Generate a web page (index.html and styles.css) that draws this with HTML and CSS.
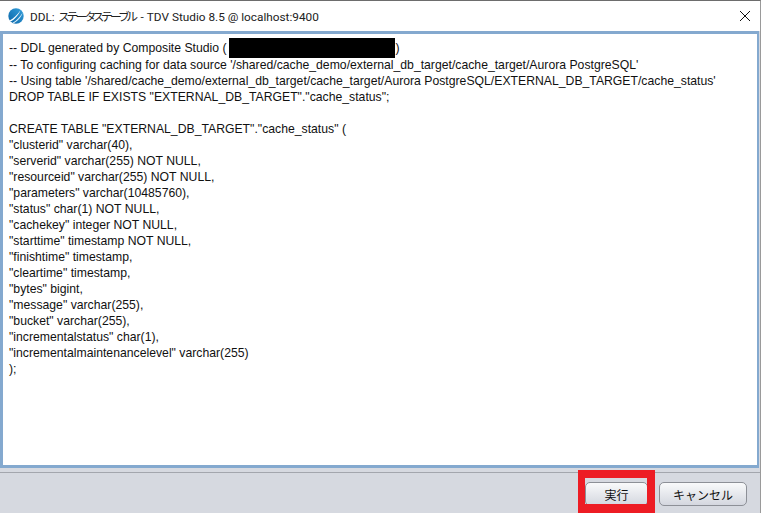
FILE: index.html
```html
<!DOCTYPE html>
<html lang="ja">
<head>
<meta charset="utf-8">
<title>DDL</title>
<link rel="stylesheet" href="styles.css">
</head>
<body>
<div class="window">
  <header class="titlebar">
    <svg class="logo" viewBox="0 0 16 16" width="16" height="16" aria-hidden="true">
      <defs><linearGradient id="g" x1="0" y1="1" x2="1" y2="0"><stop offset="0" stop-color="#0b66a8"/><stop offset="1" stop-color="#35a0dc"/></linearGradient></defs>
      <circle cx="8" cy="8" r="7.7" fill="url(#g)"/>
      <path d="M1.6 12.6C5.5 10.5 9.5 6.5 12.5 2.2C11 6.5 7 11 2.8 13.6Z" fill="#fff"/>
      <path d="M4.6 14.8C8.5 12.8 12 9 14.6 4.8C13.5 9 9.8 13 5.8 15.2Z" fill="#dff0fa"/>
    </svg>
    <span class="title">DDL: <span class="kana">ステータステーブル</span> - TDV Studio 8.5 @ localhost:9400</span>
    <svg class="close" viewBox="0 0 10 10" width="10" height="10" aria-hidden="true"><path d="M0 0l10 10M10 0L0 10" stroke="#111" stroke-width="1" fill="none"/></svg>
  </header>
  <main class="editor">
    <div class="code">-- DDL generated by Composite Studio (<span class="redact"></span>)</div>
<pre class="code rest">-- To configuring caching for data source '/shared/cache_demo/external_db_target/cache_target/Aurora PostgreSQL'
-- Using table '/shared/cache_demo/external_db_target/cache_target/Aurora PostgreSQL/EXTERNAL_DB_TARGET/cache_status'
DROP TABLE IF EXISTS "EXTERNAL_DB_TARGET"."cache_status";

CREATE TABLE "EXTERNAL_DB_TARGET"."cache_status" (
"clusterid" varchar(40),
"serverid" varchar(255) NOT NULL,
"resourceid" varchar(255) NOT NULL,
"parameters" varchar(10485760),
"status" char(1) NOT NULL,
"cachekey" integer NOT NULL,
"starttime" timestamp NOT NULL,
"finishtime" timestamp,
"cleartime" timestamp,
"bytes" bigint,
"message" varchar(255),
"bucket" varchar(255),
"incrementalstatus" char(1),
"incrementalmaintenancelevel" varchar(255)
);</pre>
  </main>
  <footer class="actions">
    <button class="btn btn-run" type="button">実行</button>
    <button class="btn btn-cancel" type="button">キャンセル</button>
  </footer>
  <div class="highlight"></div>
</div>
</body>
</html>
```
FILE: styles.css
```css
html, body { margin: 0; padding: 0; }
body { width: 762px; height: 513px; overflow: hidden; background: #fff; }
.window { position: relative; box-sizing: border-box; width: 761px; height: 513px; display: flex; flex-direction: column; border-top: 1px solid #6d6d6d; border-right: 1px solid #9a9a9a; background: #d6d9e0; }
.titlebar { box-sizing: border-box; height: 30px; flex: none; background: #fff; display: flex; align-items: center; padding: 0 10px 1px 8px; font-family: Roboto, "Noto Sans CJK JP", sans-serif; font-size: 11.8px; color: #222; }
.logo { flex: none; margin-right: 6px; }
.title { flex: 1; white-space: nowrap; }
.kana { font-feature-settings: "palt"; letter-spacing: -2.2px; margin-left: 1px; margin-right: 2px; }
.close { flex: none; }
.editor { flex: none; box-sizing: border-box; height: 437px; margin-right: 1px; background: #fff; border: 3px solid #84a9cf; border-right-width: 2px; padding: 6px 0 0 6px; }
.code { margin: 0; height: 16px; font-family: "Liberation Sans", Arial, sans-serif; font-size: 12.22px; line-height: 16px; color: #111; white-space: pre; }
pre.rest { height: auto; margin-top: 1px; }
.redact { display: inline-block; width: 166px; height: 20px; margin: -3px 1px -1px 2px; background: #000; vertical-align: -5px; }
.actions { flex: 1; margin-top: 4px; display: flex; justify-content: flex-end; align-items: flex-start; gap: 11px; padding: 9px 13px 0 0; border-top: 1px solid #a3a6ad; }
.btn { box-sizing: border-box; height: 24px; padding: 0; border: 1px solid #8d9097; border-radius: 5px; background: linear-gradient(#f9fafb, #d4d7df); font-family: "Noto Sans CJK JP", sans-serif; font-size: 12px; color: #111; }
.btn-run { width: 63px; }
.btn-cancel { width: 88px; }
.highlight { position: absolute; left: 578px; top: 469px; box-sizing: border-box; width: 77px; height: 43px; border: solid #ed1c24; border-width: 8px 8px 9px 7px; pointer-events: none; }
```
